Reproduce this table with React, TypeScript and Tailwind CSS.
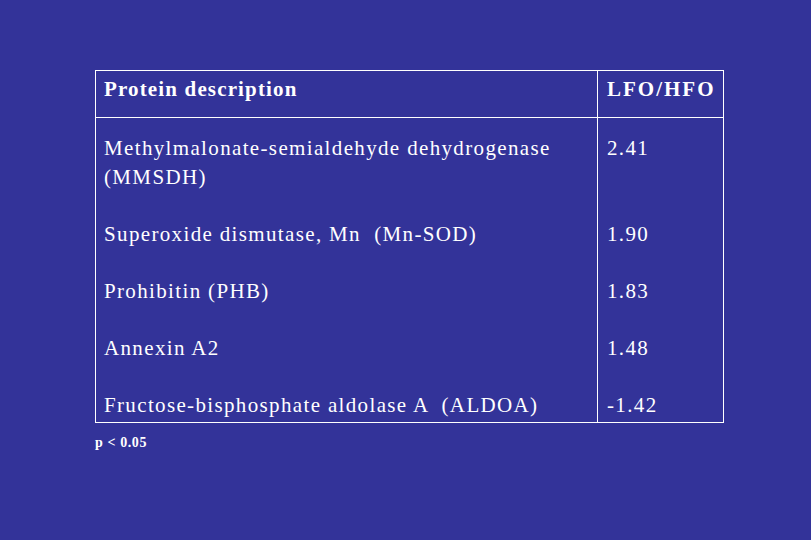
const rows: [string, string][] = [
  ["Methylmalonate-semialdehyde dehydrogenase (MMSDH)", "2.41"],
  ["Superoxide dismutase, Mn  (Mn-SOD)", "1.90"],
  ["Prohibitin (PHB)", "1.83"],
  ["Annexin A2", "1.48"],
  ["Fructose-bisphosphate aldolase A  (ALDOA)", "-1.42"],
];

export default function App() {
  return (
    <div
      className="w-[811px] h-[540px] bg-[#333399] text-white pl-[95px] pt-[70px] overflow-hidden"
      style={{ fontFamily: '"Liberation Serif", "Times New Roman", serif' }}
    >
      <div className="w-[629px] border border-white">
        <div className="grid grid-cols-[502px_1fr] h-[47px] border-b border-white text-[21px] font-bold tracking-[1.15px]">
          <div className="border-r border-white pl-[8px] pb-[8px] flex items-center">Protein description</div>
          <div className="pl-[9px] pb-[8px] flex items-center tracking-[2px]">LFO/HFO</div>
        </div>
        <div className="grid grid-cols-[502px_1fr] text-[21px] leading-[29px] tracking-[1.35px]">
          <div className="border-r border-white pl-[8px] pt-[16px] pb-[2px] flex flex-col gap-[28px] whitespace-pre">
            <div>
              Methylmalonate-semialdehyde dehydrogenase
              <br />
              (MMSDH)
            </div>
            {rows.slice(1).map((r) => (
              <div key={r[0]}>{r[0]}</div>
            ))}
          </div>
          <div className="pl-[9px] pt-[16px] pb-[2px] flex flex-col gap-[28px]">
            <div className="h-[58px]">{rows[0][1]}</div>
            {rows.slice(1).map((r) => (
              <div key={r[0]}>{r[1]}</div>
            ))}
          </div>
        </div>
      </div>
      <div className="mt-[9px] text-[14px] font-bold tracking-[0.6px]">p &lt; 0.05</div>
    </div>
  );
}
